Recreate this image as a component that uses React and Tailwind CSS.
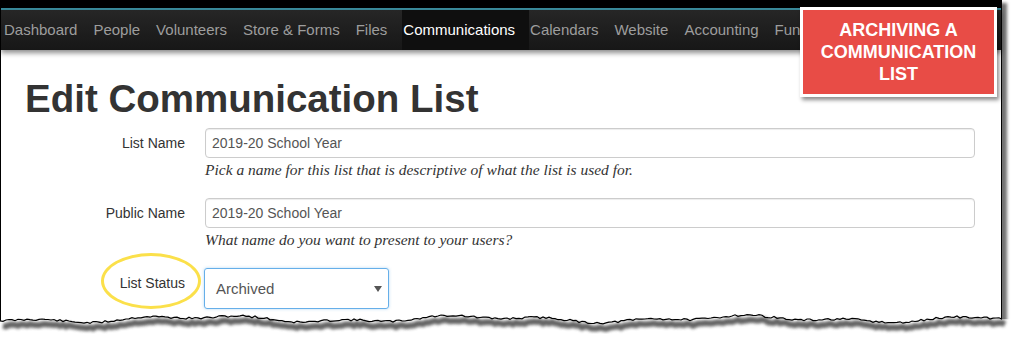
const navItems = [
  "Dashboard",
  "People",
  "Volunteers",
  "Store & Forms",
  "Files",
  "Communications",
  "Calendars",
  "Website",
  "Accounting",
  "Fundraising",
];

// jagged torn edge along the bottom of the capture
let seed = 11;
const rand = () => {
  seed = (seed * 9301 + 49297) % 233280;
  return seed / 233280;
};
const edge = [];
for (let x = 0; x <= 1003; x += 3) {
  const y =
    19 +
    2.4 * Math.sin(x / 43) +
    1.6 * Math.sin(x / 16 + 2) +
    (rand() - 0.5) * 2.2;
  edge.push([x, +y.toFixed(1)]);
}
const line = edge.map(([x, y]) => `${x},${y}`).join(" ");
const fill = `0,60 ${line} 1017,${edge[edge.length - 1][1]} 1017,60`;

function Field({ label, value, help }) {
  return (
    <div className="flex items-start">
      <label className="w-[184px] shrink-0 text-right text-[14px] leading-[30px] text-[#333]">
        {label}
      </label>
      <div className="ml-[20px] w-[770px]">
        <div className="h-[30px] rounded-[4px] border border-[#ccc] px-[6px] text-[14px] leading-[28px] text-[#555] shadow-[inset_0_1px_1px_rgba(0,0,0,0.075)]">
          {value}
        </div>
        <p className="mt-[2px] font-['Liberation_Serif',serif] text-[15.5px] italic leading-[20px] text-[#333]">
          {help}
        </p>
      </div>
    </div>
  );
}

export default function App() {
  return (
    <div className="relative h-[348px] w-[1017px] overflow-hidden bg-white font-['Liberation_Sans',Arial,sans-serif]">
      <div className="h-[340px] w-[1002px] border-x border-black bg-white shadow-[5px_3px_3px_rgba(0,0,0,0.55)]">
        <div className="h-[8px] bg-black" />
        <div className="h-[2px] bg-[#3a8c9c]" />
        <nav className="h-[40px] bg-gradient-to-b from-[#262626] to-[#171717] pl-[2px] shadow-[0_3px_5px_rgba(0,0,0,0.45)]">
          <div className="flex h-full w-[797px] items-stretch overflow-hidden">
            {navItems.map((item) => (
              <div
                key={item}
                className={
                  item === "Communications"
                    ? "flex shrink-0 items-center bg-[#0f0f0f] pl-[1px] pr-[14px] text-[15px] text-white"
                    : "flex shrink-0 items-center pl-[1px] pr-[15px] text-[15px] text-[#9d9d9d]"
                }
              >
                {item}
              </div>
            ))}
          </div>
        </nav>

        <div className="pl-[24px] pr-[26px]">
          <h1 className="mt-[28px] text-[38.5px] font-bold leading-[42px] text-[#333]">
            Edit Communication List
          </h1>
        </div>

        <div className="mt-[8px] flex flex-col gap-[18px]">
          <Field
            label="List Name"
            value="2019-20 School Year"
            help="Pick a name for this list that is descriptive of what the list is used for."
          />
          <Field
            label="Public Name"
            value="2019-20 School Year"
            help="What name do you want to present to your users?"
          />
          <div className="flex items-start">
            <label className="w-[184px] shrink-0 text-right text-[14px] leading-[30px] text-[#333]">
              List Status
            </label>
            <div className="ml-[19px] flex h-[41px] w-[185px] items-center justify-between rounded-[3px] border border-[#66afe9] pl-[11px] pr-[6px] text-[15px] text-[#555] shadow-[0_0_3px_rgba(102,175,233,0.5)]">
              <span className="mt-[1px]">Archived</span>
              <svg width="8" height="6" viewBox="0 0 8 6">
                <path d="M0 0 L8 0 L4 6 Z" fill="#555" />
              </svg>
            </div>
          </div>
        </div>
      </div>

      {/* yellow highlight ring */}
      <div className="absolute left-[101px] top-[253px] h-[56px] w-[100px] rounded-[50%] border-[3.5px] border-[#fbe04a]" />

      {/* callout */}
      <div className="absolute left-[800px] top-[7px] flex h-[90px] w-[197px] items-center justify-center border-[3px] border-white bg-[#e84c46] text-center text-[18px] font-bold leading-[22px] text-white shadow-[2px_3px_4px_rgba(0,0,0,0.45)]">
        <div>
          ARCHIVING A
          <br />
          COMMUNICATION
          <br />
          LIST
        </div>
      </div>

      {/* torn bottom edge */}
      <svg
        className="absolute left-0 top-[300px]"
        width="1017"
        height="48"
        viewBox="0 0 1017 48"
      >
        <defs>
          <filter id="blur" x="-5%" y="-50%" width="110%" height="200%">
            <feGaussianBlur stdDeviation="1.6" />
          </filter>
        </defs>
        <polygon points={fill} fill="#fff" />
        <polyline
          points={line}
          transform="translate(3 5)"
          fill="none"
          stroke="#4a4a4a"
          strokeWidth="6"
          opacity="0.85"
          filter="url(#blur)"
        />
        <polyline points={line} fill="none" stroke="#000" strokeWidth="1.2" />
      </svg>
    </div>
  );
}
